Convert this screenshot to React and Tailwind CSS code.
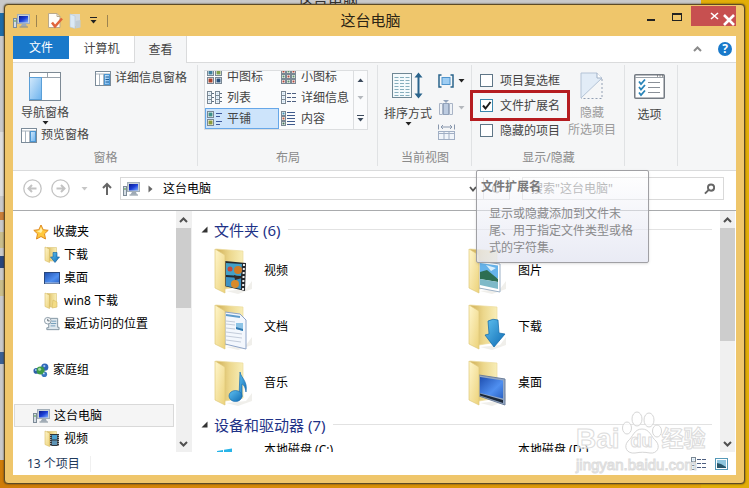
import React, { useState } from 'react';
import clsx from 'clsx';

/* Shared gradients */
const Gradients = () => (
  <svg width="0" height="0" className="absolute" aria-hidden="true">
    <defs>
      <linearGradient id="flap" x1="0" y1="0" x2="1" y2="1">
        <stop offset="0" stopColor="#fff6cc" />
        <stop offset="1" stopColor="#ecd27a" />
      </linearGradient>
      <linearGradient id="back" x1="0" y1="0" x2="1" y2="0">
        <stop offset="0" stopColor="#cfae55" />
        <stop offset="0.5" stopColor="#ecd78c" />
        <stop offset="1" stopColor="#f8eeb8" />
      </linearGradient>
      <linearGradient id="blue" x1="0" y1="0" x2="1" y2="1">
        <stop offset="0" stopColor="#5fc0f0" />
        <stop offset="1" stopColor="#0f6cb4" />
      </linearGradient>
      <linearGradient id="screen" x1="0" y1="0" x2="1" y2="1">
        <stop offset="0" stopColor="#0a1a8c" />
        <stop offset="0.5" stopColor="#1c3fd6" />
        <stop offset="1" stopColor="#7fb0ff" />
      </linearGradient>
      <linearGradient id="pane" x1="0" y1="0" x2="1" y2="1">
        <stop offset="0" stopColor="#d3e9fb" />
        <stop offset="1" stopColor="#6db3ee" />
      </linearGradient>
      <linearGradient id="desk" x1="0" y1="0" x2="1" y2="1">
        <stop offset="0" stopColor="#1f4fb0" />
        <stop offset="0.6" stopColor="#4f8ff0" />
        <stop offset="1" stopColor="#2a62c4" />
      </linearGradient>
    </defs>
  </svg>
);

/* Small icons */
const PcIcon = () => (
  <svg width="17" height="16" viewBox="0 0 17 16">
    <rect x="0.5" y="5.5" width="3" height="9" fill="#d5dde4" stroke="#7d8b97" />
    <rect x="1.5" y="7" width="1" height="2" fill="#4b9b3f" />
    <rect x="4.5" y="1.5" width="12" height="9" fill="#c9d2da" stroke="#a3afb9" />
    <rect x="6" y="3" width="9" height="6.5" fill="url(#screen)" />
    <path d="M9 11h4l1 2.5H7.5z" fill="#9eaab5" />
    <path d="M6.500 14h8.500" stroke="#7d8b97" />
  </svg>
);

const Star = () => (
  <svg width="16" height="16" viewBox="0 0 16 16">
    <path d="M8 1l2.200 4.700 5 .6-3.700 3.500 1 5.200L8 12.500 3.500 15l1-5.200L.8 6.300l5-.6z" fill="#ffc83d" stroke="#e08a1e" />
    <path d="M8 3l1.500 3.500L8 9 3.500 7l3-.5z" fill="#fff0a8" />
  </svg>
);

const SmallFolder = ({ children }) => (
  <svg width="16" height="17" viewBox="0 0 16 17">
    <path d="M3 1.500h9.500V15H5z" fill="url(#back)" stroke="#dcc477" strokeWidth="0.600" />
    <path d="M1 1l4.500 2v13.500L1 14.500z" fill="url(#flap)" stroke="#d6bb62" strokeWidth="0.600" />
    {children}
  </svg>
);

const FolderDown = () => (
  <SmallFolder>
    <path d="M9 6.500h4v4.500h2.500L11 16.500 6.500 11H9z" fill="url(#blue)" stroke="#0b5d9c" strokeWidth="0.600" />
  </SmallFolder>
);

const FolderPlain = () => (
  <SmallFolder>
    <path d="M9 8l4 2v5l-5 1z" fill="#f3dc86" stroke="#d6bb62" strokeWidth="0.600" />
  </SmallFolder>
);

const FolderFilm = () => (
  <SmallFolder>
    <rect x="6" y="4" width="9" height="12" fill="#30343a" />
    <rect x="8" y="5" width="5" height="4.500" fill="#4aa0cf" />
    <rect x="8" y="10.500" width="5" height="4.500" fill="#5d93b5" />
    <path d="M6.800 5v11M14.200 5v11" stroke="#fff" strokeDasharray="1 1" strokeWidth="0.800" />
  </SmallFolder>
);

const DesktopIcon = () => (
  <svg width="16" height="16" viewBox="0 0 16 16">
    <rect x="0.500" y="2.500" width="15" height="11" fill="url(#desk)" stroke="#28487f" />
    <path d="M1 13h14" stroke="#b7c5da" />
  </svg>
);

const RecentIcon = () => (
  <svg width="16" height="16" viewBox="0 0 17 16">
    <path d="M5 2h9.500v9.500H16V14H3v-2h2z" fill="#dfe8ee" stroke="#7f929f" />
    <path d="M8 5h5M7 7.500h6M7 10h5" stroke="#6f9bb8" />
    <circle cx="4" cy="4.500" r="3.500" fill="#f7fafc" stroke="#8b9aa5" />
    <path d="M4 2.500v2.200h2" stroke="#55636e" fill="none" />
  </svg>
);

const HomeGroup = () => (
  <svg width="16" height="16" viewBox="0 0 17 16">
    <circle cx="3.500" cy="9" r="3" fill="#2e5fa8" />
    <circle cx="12.500" cy="5" r="3.800" fill="#2f66b8" />
    <circle cx="12" cy="12.500" r="3" fill="#3a78c0" />
    <circle cx="8" cy="8.500" r="4.300" fill="#3d9a4a" />
    <circle cx="7" cy="7.200" r="1.600" fill="#a6dfa0" />
    <circle cx="12" cy="3.800" r="1.200" fill="#9cc6f2" />
    <circle cx="3" cy="8" r="1" fill="#9cc6f2" />
    <circle cx="11.500" cy="11.600" r="1" fill="#b5d8f8" />
  </svg>
);

const DocCheck = () => (
  <svg width="16" height="17" viewBox="0 0 16 17">
    <path d="M1.500 1.500h8.500l3 3v11H1.500z" fill="#fffdf8" stroke="#b9a98b" />
    <path d="M10 1.500v3h3" fill="none" stroke="#b9a98b" />
    <path d="M5 10.500l3 4 7-8" fill="none" stroke="#e0643a" strokeWidth="2.500" />
  </svg>
);

const FadedFolder = () => (
  <svg width="13" height="16" viewBox="0 0 13 16">
    <path d="M2 1h9v12H4z" fill="#d4dbe0" />
    <path d="M1 1l5 2v12.500L1 14z" fill="#dbe9f5" stroke="#b6c8d6" strokeWidth="0.600" />
    <path d="M6.500 8l5-1v7.500l-5 1z" fill="#c1cdd6" />
  </svg>
);

const Caret = ({ className = 'text-[#222]' }) => (
  <svg width="7" height="4" viewBox="0 0 7 4" className={className}>
    <path d="M0.500 0h6L3.500 3.500z" fill="currentColor" />
  </svg>
);

const PaneIcon = ({ detail }) => (
  <svg width="16" height="15" viewBox="0 0 16 15">
    <rect x="0.500" y="0.500" width="15" height="14" fill="#fff" stroke="#7b8b99" />
    <path d="M1 3h14M4.500 3v11M8.500 3v11" stroke="#a9b4be" />
    <rect x="9.500" y="3.500" width="5" height="10" fill="url(#pane)" stroke="#4b96d2" />
    {detail && <path d="M10.500 6h3.500M10.500 8.500h3.500M10.500 11h3.500" stroke="#1c5c96" />}
  </svg>
);

const NavPaneIcon = () => (
  <svg width="32" height="29" viewBox="0 0 32 29">
    <rect x="0.500" y="0.500" width="31" height="28" fill="#fff" stroke="#7d8a95" />
    <path d="M1 5.500h30M18.500 1v4" stroke="#9aa4ad" />
    <rect x="0.500" y="5.500" width="12" height="22" fill="url(#pane)" stroke="#5a9fd8" />
  </svg>
);

/* Gallery icons: little cells on the left, text lines on the right */
const Cell = ({ x, y, s = 4, fill = '#fff' }) => (
  <g>
    <rect x={x + 0.5} y={y + 0.5} width={s} height={s} fill="#fff" stroke="#7a8894" />
    <rect x={x + 1.5} y={y + 1.5} width={s - 2} height={s - 2} fill={fill} />
  </g>
);

const MediumIcon = () => (
  <svg width="16" height="16" viewBox="0 0 16 16">
    <Cell x={0} y={0} s={6} fill="#3f7f9e" />
    <Cell x={8} y={0} s={6} fill="#7ea04c" />
    <Cell x={0} y={8} s={6} fill="#a8432e" />
    <Cell x={8} y={8} s={6} fill="#27507d" />
  </svg>
);

const SmallIcon = () => (
  <svg width="16" height="16" viewBox="0 0 16 16">
    {[0, 5, 10].map((y) => [0, 5, 10].map((x) => (
      <Cell key={`${x}-${y}`} x={x} y={y} fill={(x + y) % 10 ? '#5e8f6a' : '#b04a3c'} />
    )))}
  </svg>
);

const ListIcon = () => (
  <svg width="16" height="16" viewBox="0 0 16 16">
    {[1, 5, 9].map((y) => (
      <g key={y}>
        <Cell x={0} y={y} fill="#c4dcee" />
        <Cell x={8} y={y} fill="#c4dcee" />
        <path d={`M5 ${y + 2.5}h2M13 ${y + 2.5}h2`} stroke="#5f6f80" />
      </g>
    ))}
  </svg>
);

const DetailIcon = () => (
  <svg width="16" height="16" viewBox="0 0 16 16">
    {[1, 5, 9].map((y) => (
      <g key={y}>
        <Cell x={0} y={y} fill="#c4dcee" />
        <path d={`M6 ${y + 2.5}h4M11 ${y + 2.5}h4`} stroke="#4d5f80" />
      </g>
    ))}
  </svg>
);

const TileIcon = () => (
  <svg width="16" height="16" viewBox="0 0 16 16">
    <Cell x={0} y={0} s={6} fill="#3f8f8a" />
    <Cell x={0} y={8} s={6} fill="#8a9a3c" />
    <path d="M9 2.500h6M9 5.500h4M9 10.500h6M9 13.500h4" stroke="#3f5a9c" />
  </svg>
);

const ContentIcon = () => (
  <svg width="16" height="16" viewBox="0 0 16 16">
    <Cell x={0} y={0} fill="#3f8fb4" />
    <Cell x={0} y={5} fill="#c05a3c" />
    <Cell x={0} y={10} fill="#3f6f54" />
    <path d="M6 1.500h8M6 4.500h8M6 7.500h8M6 10.500h8M6 13.500h8" stroke="#3f5a8c" />
  </svg>
);

const SortIcon = () => (
  <svg width="32" height="28" viewBox="0 0 32 28">
    <rect x="0.500" y="1.500" width="19" height="24" fill="#f4fafc" stroke="#6f8794" />
    {[5, 8, 11, 14, 17, 20, 23].map((y) => (
      <path key={y} d={`M2.500 ${y}.500h4M8 ${y}.500h4M13.500 ${y}.500h4`} stroke="#86aebd" />
    ))}
    <path d="M26.500 3v21" stroke="#2a648c" strokeWidth="2" />
    <path d="M22.500 5.500l4-5 4 5zM22.500 21.500l4 5 4-5z" fill="#2a648c" />
  </svg>
);

const GroupByIcon = () => (
  <svg width="16" height="14" viewBox="0 0 16 14">
    <path d="M3.500 1H1v12h2.500M12.500 1H15v12h-2.500" fill="none" stroke="#2a648c" strokeWidth="1.500" />
    <rect x="4" y="3.500" width="8" height="7" fill="#9ecdf3" stroke="#4f94cc" />
  </svg>
);

const AddColumnIcon = () => (
  <svg width="16" height="16" viewBox="0 0 16 16">
    <path d="M1.500 3.500h3v11h-3zM11.500 3.500h3v11h-3z" fill="#eef2f7" stroke="#a9b4c6" />
    <rect x="5.500" y="3.500" width="5" height="11" fill="#bccbe0" stroke="#93a3bb" />
    <path d="M5 0h6L8 3z" fill="#93a3bb" />
  </svg>
);

const FitColumnsIcon = () => (
  <svg width="17" height="17" viewBox="0 0 17 17">
    <path d="M0.500 0.500v5M16.500 0.500v5M3 3h11M5 1L3 3l2 2M12 1l2 2-2 2" fill="none" stroke="#8897ad" />
    <rect x="0.500" y="7.500" width="16" height="8" fill="#f1f5fa" stroke="#a1afc4" />
    <path d="M1 9.500h15M6 8v8M11 8v8" stroke="#a1afc4" />
  </svg>
);

/* Dog-eared sheet whose lower right half is only dashed */
const HideIcon = () => (
  <svg width="24" height="28" viewBox="0 0 24 28">
    <path d="M1 1h16l5 5L1 26z" fill="#e2ecf7" stroke="#b4c3d6" />
    <path d="M17 1v5h5" fill="#fff" stroke="#9fb0c6" />
    <path d="M22 7v19.500H1" fill="none" stroke="#93a0b4" strokeDasharray="2 2" />
  </svg>
);

const OptionsIcon = () => (
  <svg width="31" height="25" viewBox="0 0 31 25">
    <rect x="0.750" y="0.750" width="29.500" height="23.500" rx="1" fill="#fff" stroke="#747b83" strokeWidth="1.500" />
    <path d="M1 3.500h29" stroke="#9aa1a8" />
    <path d="M23 2h1M25.500 2h1M28 2h1" stroke="#444" />
    <path d="M5 7.500l2 2.500 4-4.500M5 13l2 2.500 4-4.500M5 18.500l2 2.500 4-4.500" fill="none" stroke="#2a84b8" strokeWidth="1.800" />
    <path d="M14 8.500h12M14 13.500h12M14 18.500h12" stroke="#8a9098" />
  </svg>
);

/* 40x48 folder with an emblem in front */
const BigFolder = ({ children }) => (
  <svg width="40" height="48" viewBox="0 0 40 48" className="shrink-0">
    <path d="M12 44l20-2 6-8v8l-14 5z" fill="#e6e4de" opacity="0.600" />
    <path d="M2 2l27 2v35l-18 3z" fill="url(#back)" stroke="#ecdb9c" strokeWidth="0.700" />
    {children}
    <path d="M1 2l10 6v38L1 41z" fill="url(#flap)" stroke="#dfc87a" strokeWidth="0.700" />
  </svg>
);

const emblems = {
  video: (
    <g>
      <path d="M11 14l21 2-1 28-21-5z" fill="#24282e" />
      <path d="M12 16l16 1-1 12-15-1z" fill="#43a0c8" />
      <path d="M12 30l15 1v11l-15-3z" fill="#3d93c4" />
      <circle cx="24" cy="23" r="4" fill="#d07b25" />
      <circle cx="16" cy="22" r="2.500" fill="#c4473b" />
      <circle cx="21" cy="37" r="4" fill="#d98a2c" />
      <path d="M20 28l8 3-7 2z" fill="#382a24" />
      <path d="M30 17l-1 26" stroke="#eee" strokeWidth="2" strokeDasharray="2 2" />
    </g>
  ),
  document: (
    <g>
      <path d="M11 9l15 2 6 6v29l-21-5z" fill="#f3f7fd" stroke="#8ea4c8" />
      <path d="M12 18l9 1M12 21l9 1M12 25l9 1M12 29l16 2M12 33l16 2M12 37l15 2" stroke="#c3ccda" />
      <path d="M12 12l14 2" stroke="#5f9ccc" strokeWidth="2" />
      <path d="M22 20h7v8l-7-2z" fill="#8cc3e6" />
      <path d="M22 24l7 2v2l-7-2z" fill="#2f78b0" />
    </g>
  ),
  music: (
    <g fill="url(#blue)" stroke="#1b6fb0" strokeWidth="0.700">
      <path d="M26 13c1 6 8 9 6 20-1-5-2-7-4-8v13h-3z" />
      <ellipse cx="21.500" cy="37" rx="6.500" ry="5.500" />
    </g>
  ),
  picture: (
    <g>
      <path d="M11 14l21 3v28l-21-4z" fill="#fff" stroke="#9bb0c6" />
      <path d="M12 16l18 2.500v13l-18-2.500z" fill="#66b3ea" />
      <path d="M12 25l7-2 11 9v3l-18-3z" fill="#2d6e52" />
      <path d="M12 32l18 3v7l-18-4z" fill="#7db9c8" />
      <path d="M18 18l10 3-5 3z" fill="#d9effc" />
    </g>
  ),
  download: (
    <path d="M20 18q5-3 10-1l1 13 6 1-11 13-9-12 4-1z" fill="url(#blue)" stroke="#0f67a8" strokeWidth="0.700" />
  ),
  desktop: (
    <g>
      <path d="M11 16l26 4v26l-26-9z" fill="#93a7c4" stroke="#6c7f9b" />
      <path d="M12 18l23 3.500v18L12 34z" fill="url(#desk)" />
      <path d="M12 34.500l23 6.500v3L12 36.500z" fill="#1c2838" />
    </g>
  ),
};

/* Data */
const galleryItems = [
  { text: '中图标', icon: MediumIcon },
  { text: '小图标', icon: SmallIcon },
  { text: '列表', icon: ListIcon },
  { text: '详细信息', icon: DetailIcon },
  { text: '平铺', icon: TileIcon },
  { text: '内容', icon: ContentIcon },
];

const sidebarItems = [
  { text: '收藏夹', icon: Star },
  { text: '下载', icon: FolderDown, child: true },
  { text: '桌面', icon: DesktopIcon, child: true },
  { text: 'win8 下载', icon: FolderPlain, child: true },
  { text: '最近访问的位置', icon: RecentIcon, child: true },
  null,
  { text: '家庭组', icon: HomeGroup },
  null,
  { text: '这台电脑', icon: PcIcon, selected: true },
  { text: '视频', icon: FolderFilm, child: true },
];

const folders = [
  { text: '视频', kind: 'video' },
  { text: '图片', kind: 'picture' },
  { text: '文档', kind: 'document' },
  { text: '下载', kind: 'download' },
  { text: '音乐', kind: 'music' },
  { text: '桌面', kind: 'desktop' },
];

const TitleBar = () => (
  <header className="grid h-[31px] shrink-0 grid-cols-[1fr_auto_1fr]">
    <div className="flex items-center">
      <PcIcon />
      <span className="ml-1.5 h-3 w-px bg-[#9c8350]" />
      <button className="ml-2.5" aria-label="属性"><DocCheck /></button>
      <button className="ml-1.5" aria-label="新建文件夹"><FadedFolder /></button>
      <button className="ml-2 flex flex-col items-center gap-0.5" aria-label="自定义快速访问工具栏">
        <span className="h-px w-[7px] bg-[#222]" />
        <Caret />
      </button>
      <span className="ml-2.5 h-3 w-px bg-[#9c8350]" />
    </div>
    <h1 className="pr-2 text-[15px] leading-[30px] text-[#2b2415]">这台电脑</h1>
    <div className="flex items-start justify-end">
      <button className="flex h-5 w-6 items-end justify-center pb-1" aria-label="最小化">
        <span className="h-0.5 w-2 bg-[#222]" />
      </button>
      <button className="ml-0.5 mr-0.5 flex h-5 w-6 items-end justify-center pb-1" aria-label="最大化">
        <span className="h-2 w-[10px] border border-t-2 border-[#222]" />
      </button>
      <button className="mt-px h-5 w-[45px] bg-[#c75050]" aria-label="关闭">
        <svg width="45" height="20" viewBox="0 0 45 20" fill="none" stroke="#fff">
          <path d="M20 7l7 6M27 7l-7 6" strokeWidth="1.600" />
          <path d="M33 9l10 10M43 9L33 19" strokeWidth="2.600" />
        </svg>
      </button>
    </div>
  </header>
);

const Tabs = () => (
  <nav className="flex h-[27px] shrink-0 items-stretch border-b border-[#dadbdc] bg-white text-[#444]">
    <button className="h-[23px] w-14 bg-[#1979ca] text-white">文件</button>
    <button className="w-[65px]">计算机</button>
    <button className="-mb-px w-[53px] border-x border-[#dadbdc] bg-[#f5f6f7]">查看</button>
    <div className="ml-auto flex items-center gap-4 pr-1">
      <button aria-label="最小化功能区">
        <svg width="9" height="6" viewBox="0 0 9 6" fill="none" stroke="#8b8b8b" strokeWidth="2">
          <path d="M1 5l3.500-3.500L8 5" />
        </svg>
      </button>
      <button className="h-3.5 w-3.5 rounded-full bg-[#1979ca] text-[12px] font-bold leading-3.5 text-white" aria-label="帮助">?</button>
    </div>
  </nav>
);

const RibbonGroup = ({ label, className, children }) => (
  <section className={clsx('relative flex shrink-0 flex-col', className)}>
    <div className="flex h-[83px] items-start pt-[7px]">{children}</div>
    <div className="text-center leading-6 text-[#8a8a8a]">{label}</div>
    <span className="absolute right-0 top-0.5 bottom-1 w-px bg-[#e0e2e4]" />
  </section>
);

const CheckRow = ({ label, checked, onChange, highlight }) => (
  <label className="relative flex h-[25px] items-center gap-[7px]">
    <span className="relative flex">
      <input
        type="checkbox"
        checked={checked}
        onChange={onChange}
        className={clsx('h-[13px] w-[13px] appearance-none border bg-white', checked ? 'border-[#3a87ad]' : 'border-[#5f7687]')}
      />
      {checked && (
        <svg className="pointer-events-none absolute inset-0" width="13" height="13" viewBox="0 0 13 13">
          <path d="M3 6.500l2.500 3L10.500 3" fill="none" stroke="#1a1a1a" strokeWidth="2" />
        </svg>
      )}
    </span>
    <span>{label}</span>
    {highlight && <span className="absolute -inset-x-2.5 -inset-y-[3px] border-3 border-[#b51c20]" />}
  </label>
);

const Ribbon = () => {
  const [layout, setLayout] = useState('平铺');
  const [options, setOptions] = useState({ 项目复选框: false, 文件扩展名: true, 隐藏的项目: false });
  const toggle = (name) => setOptions({ ...options, [name]: !options[name] });

  return (
    <div className="flex shrink-0 border-b border-[#dadbdc] bg-[#f5f6f7] text-[#444]">
      <RibbonGroup label="窗格" className="w-[185px]">
        <div className="flex flex-col items-start pl-2">
          <button className="flex w-12 flex-col items-center pt-0.5">
            <NavPaneIcon />
            <span className="mt-1 leading-4">导航窗格</span>
            <Caret />
          </button>
          <button className="flex items-center gap-1 leading-5"><PaneIcon />预览窗格</button>
        </div>
        <button className="ml-1.5 flex items-center gap-1 leading-4"><PaneIcon detail />详细信息窗格</button>
      </RibbonGroup>

      <RibbonGroup label="布局" className="w-[180px]">
        <div className="mx-1.5 flex h-[60px] w-[164px] border border-[#dcdee0] bg-[#fafbfc]">
          <div className="grid flex-1 grid-cols-2 content-end overflow-hidden">
            {galleryItems.map(({ text, icon: Icon }) => (
              <button
                key={text}
                onClick={() => setLayout(text)}
                className={clsx(
                  'flex h-[21px] items-center gap-1 border pl-px',
                  text === layout ? 'border-[#66a7e8] bg-[#cde4fb]' : 'border-transparent'
                )}
              >
                <Icon />
                <span className="whitespace-nowrap">{text}</span>
              </button>
            ))}
          </div>
          <div className="flex w-3.5 flex-col items-center justify-around border-l border-[#dcdee0]">
            <button aria-label="上一行"><Caret className="rotate-180 text-[#3c4a5c]" /></button>
            <button aria-label="下一行"><Caret className="text-[#b4b8bd]" /></button>
            <button className="flex flex-col gap-0.5" aria-label="更多">
              <span className="h-px w-[7px] bg-[#3c4a5c]" />
              <Caret className="text-[#3c4a5c]" />
            </button>
          </div>
        </div>
      </RibbonGroup>

      <RibbonGroup label="当前视图" className="w-[94px]">
        <button className="ml-1.5 flex w-12 flex-col items-center pt-0.5">
          <SortIcon />
          <span className="mt-1.5 leading-4">排序方式</span>
          <Caret />
        </button>
        <div className="ml-1.5 flex flex-col">
          <button className="flex h-[25px] items-center gap-1 pb-1" aria-label="分组依据"><GroupByIcon /><Caret /></button>
          <button className="flex h-[25px] items-center gap-1" aria-label="添加列"><AddColumnIcon /><Caret className="text-[#b4b8bd]" /></button>
          <button className="flex h-[25px] items-center" aria-label="将所有列调整为合适的大小"><FitColumnsIcon /></button>
        </div>
      </RibbonGroup>

      <RibbonGroup label="显示/隐藏" className="w-[153px]">
        <div className="-mt-0.5 ml-2 flex flex-col">
          {Object.keys(options).map((name) => (
            <CheckRow
              key={name}
              label={name}
              checked={options[name]}
              onChange={() => toggle(name)}
              highlight={name === '文件扩展名'}
            />
          ))}
        </div>
        <button className="ml-2 flex w-12 flex-col items-center pt-0.5 text-[#9b9b9b]">
          <HideIcon />
          <span className="mt-1 leading-[17px]">隐藏<br />所选项目</span>
        </button>

        {/* Tooltip of the extension checkbox */}
        <div
          role="tooltip"
          className="absolute left-1 top-full z-10 h-[93px] w-[173px] rounded-xs border border-[#a0a0a4] bg-linear-to-b from-white/40 to-[#e4e6f2]/80 pl-1 text-[#8a8a8c] shadow-sm"
        >
          <p className="pt-1.5 font-bold leading-5 text-[#7a7a7c]">文件扩展名</p>
          <p className="ml-2 mt-2 w-36 leading-[17px]">显示或隐藏添加到文件末尾、用于指定文件类型或格式的字符集。</p>
        </div>
      </RibbonGroup>

      <RibbonGroup className="w-[53px]">
        <button className="flex w-full flex-col items-center pt-1 pr-1">
          <OptionsIcon />
          <span className="mt-2 leading-4">选项</span>
        </button>
      </RibbonGroup>
    </div>
  );
};

const AddressBar = () => (
  <div className="flex h-10 shrink-0 items-center border-b border-[#a9abad] bg-white pr-3 pl-2.5 pb-1">
    {['M13.500 9.500H5.500M9 6L5.500 9.500 9 13', 'M5.500 9.500h8M10 6l3.500 3.500L10 13'].map((d, i) => (
      <button key={d} className="mr-[9px]" aria-label={i ? '前进' : '后退'}>
        <svg width="19" height="19" viewBox="0 0 19 19" fill="none" stroke="#c3c3c3">
          <circle cx="9.500" cy="9.500" r="8.700" strokeWidth="1.300" />
          <path d={d} strokeWidth="2" />
        </svg>
      </button>
    ))}
    <button className="ml-0.5" aria-label="最近浏览的位置"><Caret className="text-[#c6c6c6]" /></button>
    <button className="ml-3.5" aria-label="上移">
      <svg width="10" height="13" viewBox="0 0 10 13" fill="none" stroke="#666" strokeWidth="2">
        <path d="M5 13V2M1 6l4-4 4 4" />
      </svg>
    </button>
    <div className="ml-2 flex h-[23px] flex-1 items-center border border-[#d9d9d9] pl-0.5">
      <PcIcon />
      <svg className="ml-2" width="5" height="8" viewBox="0 0 5 8"><path d="M0.500 0.500v7L4.500 4z" fill="#666" /></svg>
      <button className="ml-2.5 text-black">这台电脑</button>
      <button className="ml-auto mr-1.5" aria-label="以前的位置">
        <svg width="8" height="6" viewBox="0 0 8 6" fill="none" stroke="#555" strokeWidth="1.800"><path d="M1 1l3 3.500L7 1" /></svg>
      </button>
      <button className="flex h-full w-[26px] items-center justify-center border-l border-[#d9d9d9]" aria-label="刷新">
        <svg width="11" height="11" viewBox="0 0 11 11" fill="none" stroke="#b0b0b0" strokeWidth="1.500"><path d="M9 3.500A4 4 0 1 0 9.500 6M9.500 1v3h-3" /></svg>
      </button>
    </div>
    <label className="ml-3 flex h-[23px] w-[202px] items-center border border-[#d9d9d9] pr-2 pl-2">
      <input
        type="text"
        aria-label="搜索"
        placeholder={'搜索"这台电脑"'}
        className="w-full min-w-0 bg-transparent outline-none placeholder:text-[#858585]"
      />
      <svg width="12" height="12" viewBox="0 0 12 12" fill="none" stroke="#666" strokeWidth="2">
        <circle cx="7.500" cy="4.500" r="3.300" />
        <path d="M5 7L1 11" />
      </svg>
    </label>
  </div>
);

const ScrollBar = ({ thumb }) => (
  <div className="flex w-[15px] shrink-0 flex-col items-center bg-[#f0f0f0]">
    <svg className="h-[17px] shrink-0" width="9" height="17" viewBox="0 0 9 17" fill="none" stroke="#505050" strokeWidth="2">
      <path d="M1 11l3.500-3.500L8 11" />
    </svg>
    <div className={clsx('w-full bg-[#cdcdcd]', thumb)} />
    <svg className="mt-auto h-[17px] shrink-0" width="9" height="17" viewBox="0 0 9 17" fill="none" stroke="#505050" strokeWidth="2">
      <path d="M1 7l3.500 3.500L8 7" />
    </svg>
  </div>
);

const Sidebar = () => (
  <aside className="flex w-[178px] shrink-0">
    <ul className="flex-1 overflow-hidden pl-px pr-0.5 pt-[9px] text-black">
      {sidebarItems.map((item, i) => {
        if (!item) return <li key={i} className="h-[23px]" />;
        const Icon = item.icon;
        return (
          <li
            key={item.text + i}
            className={clsx(
              'flex h-[23px] items-center gap-1 border',
              item.child ? 'pl-[29px]' : 'pl-[18px]',
              item.selected ? 'border-[#d9d9d9] bg-[#f5f5f5]' : 'border-transparent'
            )}
          >
            <Icon />
            <a href="#" className="whitespace-nowrap">{item.text}</a>
          </li>
        );
      })}
    </ul>
    <ScrollBar thumb="h-1/3" />
  </aside>
);

const SectionTitle = ({ children }) => (
  <div className="flex h-[27px] items-center pl-[9px] pr-2">
    <svg width="7" height="7" viewBox="0 0 7 7"><path d="M6.500 0.500v6h-6z" fill="#333" /></svg>
    <h2 className="ml-1.5 text-[15px] text-[#1e3287]">{children}</h2>
    <span className="ml-2 h-px flex-1 bg-[#e2e2e2]" />
  </div>
);

const Content = () => (
  <main className="flex min-w-0 flex-1 border-l border-[#f0f0f0] pr-px">
    <div className="flex-1 overflow-hidden pt-[5px] text-black">
      <SectionTitle>文件夹 (6)</SectionTitle>
      <ul className="grid grid-cols-[254px_1fr] pl-[22px]">
        {folders.map((folder) => (
          <li key={folder.text} className="flex h-14 items-center gap-2.5">
            <BigFolder>{emblems[folder.kind]}</BigFolder>
            <a href="#">{folder.text}</a>
          </li>
        ))}
      </ul>
      <SectionTitle>设备和驱动器 (7)</SectionTitle>
      <ul className="grid grid-cols-[254px_1fr] pl-[22px]">
        {['本地磁盘 (C:)', '本地磁盘 (D:)'].map((drive, i) => (
          <li key={drive} className="flex h-14 items-start gap-2.5 pt-1">
            <svg className="shrink-0" width="40" height="40" viewBox="0 0 40 40">
              {i === 0 && <path d="M3 9l6-1v8H3zM10 7.800l8-1.300v9h-8z" fill="#28b4e8" />}
            </svg>
            <a href="#" className="leading-4">{drive}</a>
          </li>
        ))}
      </ul>
    </div>
    <ScrollBar thumb="h-[47%]" />
  </main>
);

const StatusBar = () => (
  <footer className="flex h-[23px] shrink-0 items-center bg-white pr-2 pl-3.5 text-[#1e395b]">
    <span>13 个项目</span>
    <span className="ml-2.5 h-4 w-px bg-[#f0f0f0]" />
    <button className="ml-auto" aria-label="详细信息视图"><DetailIcon /></button>
    <button className="ml-2" aria-label="大缩略图视图">
      <svg width="13" height="12" viewBox="0 0 13 12">
        <rect x="0.500" y="0.500" width="12" height="11" fill="#fff" stroke="#5599b8" />
        <rect x="2" y="2" width="9" height="8" fill="#8fc6de" />
        <path d="M2 5l4 1 5 3v1H2z" fill="#28566a" />
      </svg>
    </button>
  </footer>
);

const Watermark = () => (
  <div className="pointer-events-none absolute right-5 bottom-2 w-[148px] font-['Liberation_Sans','Noto_Sans_CJK_SC',sans-serif] font-bold text-white/60 [-webkit-text-stroke:1px_#dcdcdc]">
    <div className="flex items-end">
      <span className="text-[28px] leading-8">Bai</span>
      <span className="relative ml-0.5 h-11 w-10">
        <svg width="40" height="44" viewBox="0 0 40 44" fill="#ffffffb0" stroke="#d6d6d6">
          <ellipse cx="5" cy="17" rx="4.500" ry="6" />
          <ellipse cx="15" cy="8" rx="5" ry="7" />
          <ellipse cx="27" cy="9" rx="5" ry="7" />
          <ellipse cx="35" cy="20" rx="4.500" ry="6" />
          <path d="M20 18c8 0 9 8 14 12 5 6 1 13-6 12-6-1-9-1-15 0-8 1-12-6-7-12 5-4 6-12 14-12z" />
        </svg>
        <span className="absolute inset-x-0 bottom-1 text-center text-[18px] leading-5">du</span>
      </span>
      <span className="text-[22px] leading-8">经验</span>
    </div>
    <div className="text-[15px] font-normal leading-5">jingyan.baidu.com</div>
  </div>
);

/* Slivers of the desktop and of the window behind */
const Backdrop = () => (
  <div className="absolute inset-0 -z-10 bg-linear-to-r from-[#cf7c08] to-[#e3a50a]" aria-hidden="true">
    <div className="absolute inset-y-0 right-0 w-12 bg-[#e2ae08]" />
    <div className="absolute left-0 right-12 top-0 bottom-7 overflow-hidden bg-[#c9c9ca]">
      <div className="h-[13px] pl-[298px] text-[15px] leading-[0px] text-[#333]">这台电脑</div>
      <div className="h-[23px] w-2 bg-[#1c6ba8]" />
      <div className="mt-24 h-16 w-2 bg-[#dedede]" />
      <div className="mt-4 h-2 w-2 bg-[#c87f3a]" />
      <div className="mt-3 h-4 w-2 bg-[#c9bd8c]" />
      <div className="mt-2 h-3 w-2 bg-[#27457c]" />
      <div className="mt-3 h-4 w-2 bg-[#c9bd8c]" />
      <div className="mt-14 h-3 w-2 bg-[#3a5f94]" />
    </div>
  </div>
);

const App = () => (
  <div className="relative isolate h-screen p-1 font-['Noto_Sans','Noto_Sans_CJK_SC',sans-serif] text-[12px] leading-4">
    <Gradients />
    <Backdrop />
    <div className="relative flex h-full flex-col rounded-sm border border-[#5c4a26] bg-[#efc66b] px-2 pb-2 shadow-[0_0_2px_#3a2c10]">
      <TitleBar />
      <div className="flex min-h-0 flex-1 flex-col bg-white">
        <Tabs />
        <Ribbon />
        <AddressBar />
        <div className="flex min-h-0 flex-1">
          <Sidebar />
          <Content />
        </div>
        <StatusBar />
      </div>
      <Watermark />
    </div>
  </div>
);

export default App;
